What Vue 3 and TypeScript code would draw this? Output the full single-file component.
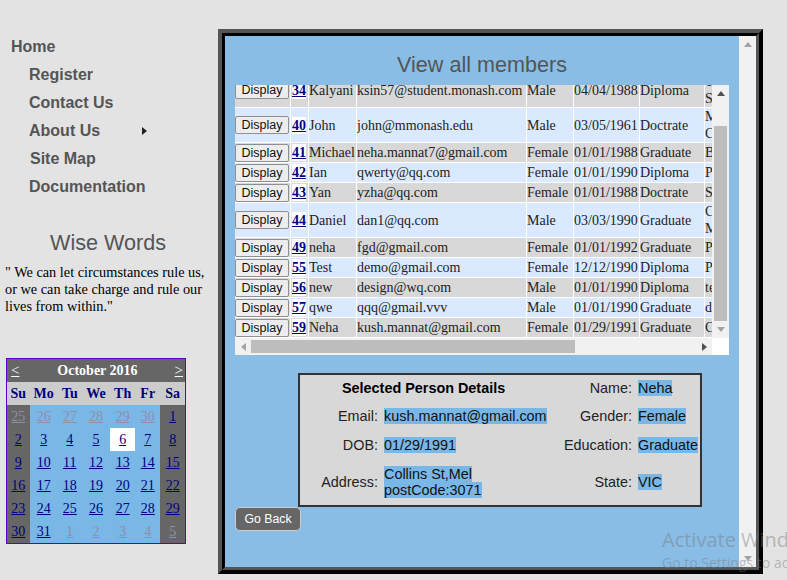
<template>
  <div class="page">
    <aside class="side">
      <nav class="menu">
        <a class="home">Home</a>
        <a>Register</a>
        <a>Contact Us</a>
        <a class="has-sub">About Us<i class="arrow"></i></a>
        <a class="site">Site Map</a>
        <a>Documentation</a>
      </nav>
      <h2 class="wise">Wise Words</h2>
      <p class="quote">" We can let circumstances rule us, or we can take charge and rule our lives from within."</p>
      <table class="cal">
        <colgroup>
          <col v-for="w in calCols" :key="w.id" :style="{ width: w.px + 'px' }" />
        </colgroup>
        <tbody>
          <tr class="cal-title">
            <td class="prev"><a>&lt;</a></td>
            <td colspan="5" class="month">October 2016</td>
            <td class="next"><a>&gt;</a></td>
          </tr>
          <tr class="cal-head">
            <th v-for="d in dayNames" :key="d">{{ d }}</th>
          </tr>
          <tr v-for="(week, i) in weeks" :key="i">
            <td
              v-for="(day, j) in week"
              :key="j"
              :class="{ weekend: j === 0 || j === 6, today: day.n === 6 && !day.other }"
            >
              <a :class="{ other: day.other }">{{ day.n }}</a>
            </td>
          </tr>
        </tbody>
      </table>
    </aside>

    <main class="frame">
      <div class="frame-inner">
        <div class="panel">
          <h1 class="title">View all members</h1>
          <div class="list">
            <div ref="listBox" class="list-view">
              <table class="members">
                <colgroup>
                  <col style="width: 55px" />
                  <col style="width: 17px" />
                  <col style="width: 47px" />
                  <col style="width: 169px" />
                  <col style="width: 46px" />
                  <col style="width: 65px" />
                  <col style="width: 64px" />
                  <col style="width: 100px" />
                  <col style="width: 82px" />
                </colgroup>
                <tbody>
                  <tr class="head">
                    <td></td><td>Id</td><td>Name</td><td>Email</td><td>Gender</td><td>DOB</td><td>Education</td><td>Address</td><td>State</td>
                  </tr>
                  <tr v-for="(m, i) in members" :key="m.id" :class="i % 2 === 0 ? 'odd' : 'even'">
                    <td class="btn-cell"><button class="show">Display</button></td>
                    <td><a class="id">{{ m.id }}</a></td>
                    <td>{{ m.name }}</td>
                    <td>{{ m.email }}</td>
                    <td>{{ m.gender }}</td>
                    <td>{{ m.dob }}</td>
                    <td>{{ m.edu }}</td>
                    <td class="addr">{{ m.addr }}</td>
                    <td>VIC</td>
                  </tr>
                </tbody>
              </table>
            </div>
            <div class="vbar">
              <span class="sb-btn"><i class="tri up dark"></i></span>
              <span class="v-gap"></span>
              <span class="v-thumb"></span>
              <span class="sb-btn"><i class="tri down"></i></span>
            </div>
            <div class="hbar">
              <span class="sb-btn h"><i class="tri left"></i></span>
              <span class="h-thumb"></span>
              <span class="h-gap"></span>
              <span class="sb-btn h"><i class="tri right dark"></i></span>
            </div>
            <div class="corner"></div>
          </div>

          <div class="details">
            <table class="person">
              <colgroup>
                <col style="width: 84px" />
                <col style="width: 172px" />
                <col style="width: 82px" />
                <col style="width: 62px" />
              </colgroup>
              <tbody>
                <tr class="r1">
                  <td colspan="2" class="person-title">Selected Person Details</td>
                  <td class="lbl">Name:</td>
                  <td><span class="val">Neha</span></td>
                </tr>
                <tr class="r2">
                  <td class="lbl">Email:</td>
                  <td><span class="val">kush.mannat@gmail.com</span></td>
                  <td class="lbl">Gender:</td>
                  <td><span class="val">Female</span></td>
                </tr>
                <tr class="r3">
                  <td class="lbl">DOB:</td>
                  <td><span class="val">01/29/1991</span></td>
                  <td class="lbl">Education:</td>
                  <td><span class="val">Graduate</span></td>
                </tr>
                <tr class="r4">
                  <td class="lbl">Address:</td>
                  <td><span class="val">Collins St,Mel<br />postCode:3071</span></td>
                  <td class="lbl">State:</td>
                  <td><span class="val">VIC</span></td>
                </tr>
              </tbody>
            </table>
          </div>
          <button class="back">Go Back</button>
        </div>
        <div class="panel-bar">
          <span class="sb-btn"><i class="tri up"></i></span>
          <span class="sb-btn"><i class="tri down"></i></span>
        </div>
      </div>
    </main>

    <div class="activate">
      <div class="a1">Activate Windows</div>
      <div class="a2">Go to Settings to activate Windows.</div>
    </div>
  </div>
</template>

<script setup lang="ts">
import { onMounted, ref } from 'vue';

interface Member {
  id: number;
  name: string;
  email: string;
  gender: string;
  dob: string;
  edu: string;
  addr: string;
}

interface CalDay {
  n: number;
  other: boolean;
}

const listBox = ref<HTMLElement | null>(null);

const calCols = [23, 28, 24, 28, 25, 25, 25].map((px, id) => ({ id, px }));
const dayNames = ['Su', 'Mo', 'Tu', 'We', 'Th', 'Fr', 'Sa'];

// Sep 25 .. Nov 5
const weeks: CalDay[][] = [];
const seq: CalDay[] = [];
for (let n = 25; n <= 30; n++) seq.push({ n, other: true });
for (let n = 1; n <= 31; n++) seq.push({ n, other: false });
for (let n = 1; n <= 5; n++) seq.push({ n, other: true });
for (let i = 0; i < seq.length; i += 7) weeks.push(seq.slice(i, i + 7));

const members: Member[] = [
  { id: 34, name: 'Kalyani', email: 'ksin57@student.monash.com', gender: 'Male', dob: '04/04/1988', edu: 'Diploma', addr: 'T St\nSuburb' },
  { id: 40, name: 'John', email: 'john@mmonash.edu', gender: 'Male', dob: '03/05/1961', edu: 'Doctrate', addr: 'Monash\nClayton' },
  { id: 41, name: 'Michael', email: 'neha.mannat7@gmail.com', gender: 'Female', dob: '01/01/1988', edu: 'Graduate', addr: 'Box Hill' },
  { id: 42, name: 'Ian', email: 'qwerty@qq.com', gender: 'Female', dob: '01/01/1990', edu: 'Diploma', addr: 'Perth' },
  { id: 43, name: 'Yan', email: 'yzha@qq.com', gender: 'Female', dob: '01/01/1988', edu: 'Doctrate', addr: 'Sydney' },
  { id: 44, name: 'Daniel', email: 'dan1@qq.com', gender: 'Male', dob: '03/03/1990', edu: 'Graduate', addr: 'Clayton\nMonash' },
  { id: 49, name: 'neha', email: 'fgd@gmail.com', gender: 'Female', dob: '01/01/1992', edu: 'Graduate', addr: 'Preston' },
  { id: 55, name: 'Test', email: 'demo@gmail.com', gender: 'Female', dob: '12/12/1990', edu: 'Diploma', addr: 'Parkville' },
  { id: 56, name: 'new', email: 'design@wq.com', gender: 'Male', dob: '01/01/1990', edu: 'Diploma', addr: 'test' },
  { id: 57, name: 'qwe', email: 'qqq@gmail.vvv', gender: 'Male', dob: '01/01/1990', edu: 'Graduate', addr: 'dd' },
  { id: 59, name: 'Neha', email: 'kush.mannat@gmail.com', gender: 'Female', dob: '01/29/1991', edu: 'Graduate', addr: 'Collins St' }
];

onMounted(() => {
  if (listBox.value) listBox.value.scrollTop = listBox.value.scrollHeight;
});
</script>

<style>
html,
body {
  margin: 0;
  height: 100%;
  overflow: hidden;
  background: #e3e3e3;
}
</style>

<style scoped>
.page {
  position: relative;
  width: 787px;
  height: 580px;
  overflow: hidden;
  display: flex;
  align-items: flex-start;
  font-family: 'Liberation Sans', Arial, sans-serif;
}

.side {
  width: 218px;
  flex: none;
  padding-top: 33px;
}

.menu {
  display: flex;
  flex-direction: column;
  font-size: 16px;
  font-weight: bold;
  color: #555;
  padding-left: 29px;
}

.menu a {
  height: 28px;
  line-height: 28px;
  position: relative;
}

.menu .home {
  margin-left: -18px;
}

.menu .site {
  margin-left: 1px;
}

.arrow {
  position: absolute;
  left: 113px;
  top: 10px;
  border-left: 5px solid #222;
  border-top: 4px solid transparent;
  border-bottom: 4px solid transparent;
}

.wise {
  margin: 28px 0 0;
  padding-right: 2px;
  font-size: 21.6px;
  font-weight: normal;
  line-height: 28px;
  color: #555;
  text-align: center;
}

.quote {
  width: 205px;
  margin: 7px 0 0 5px;
  font-family: 'Liberation Serif', serif;
  font-size: 14.3px;
  line-height: 17px;
  color: #000;
}

.cal {
  margin: 43px 0 0 6px;
  width: 180px;
  table-layout: fixed;
  border-collapse: collapse;
  border: 1px solid #5a00cc;
  font-family: 'Liberation Serif', serif;
  font-size: 14px;
  background: #79b7e7;
}

.cal td,
.cal th {
  padding: 0;
  height: 23px;
  text-align: center;
}

.cal a {
  color: #000080;
  text-decoration: underline;
}

.cal a.other {
  color: #8f8fa8;
}

.cal-title td {
  background: #666;
  color: #fff;
  font-weight: bold;
}

.cal .prev {
  text-align: left;
  padding-left: 4px;
}

.cal .next {
  text-align: right;
  padding-right: 2px;
}

.cal .month {
  padding-left: 5px;
}

.cal-title a {
  color: #fff;
  font-size: 15px;
  font-weight: normal;
}

.cal-head th {
  background: #ccc;
  color: #000080;
  font-weight: bold;
}

.cal td.weekend {
  background: #666;
}

.cal td.today {
  background: #fff;
}

.frame {
  width: 545px;
  height: 545px;
  flex: none;
  margin-top: 29px;
  box-sizing: border-box;
  border: 4px solid;
  border-color: #555 #000 #000 #555;
}

.frame-inner {
  height: 100%;
  box-sizing: border-box;
  border: 3px solid;
  border-color: #000 #555 #555 #000;
  display: flex;
}

.panel {
  flex: 1;
  min-width: 0;
  background: #89bde6;
  padding: 0 10px;
}

.panel-bar {
  width: 17px;
  flex: none;
  background: #f1f1f1;
  display: flex;
  flex-direction: column;
  justify-content: space-between;
}

.sb-btn {
  display: flex;
  align-items: center;
  justify-content: center;
  height: 17px;
  flex: none;
}

.sb-btn.h {
  width: 16px;
  height: 17px;
}

.tri {
  display: block;
  width: 0;
  height: 0;
}

.tri.up {
  border-left: 4.5px solid transparent;
  border-right: 4.5px solid transparent;
  border-bottom: 5px solid #a3a3a3;
}

.tri.down {
  border-left: 4.5px solid transparent;
  border-right: 4.5px solid transparent;
  border-top: 5px solid #a3a3a3;
}

.tri.left {
  border-top: 4.5px solid transparent;
  border-bottom: 4.5px solid transparent;
  border-right: 5px solid #a3a3a3;
}

.tri.right {
  border-top: 4.5px solid transparent;
  border-bottom: 4.5px solid transparent;
  border-left: 5px solid #a3a3a3;
}

.tri.up.dark {
  border-bottom-color: #505050;
}

.tri.right.dark {
  border-left-color: #505050;
}

.title {
  margin: 0;
  height: 49px;
  padding-top: 15px;
  box-sizing: border-box;
  line-height: 28px;
  font-size: 21.6px;
  font-weight: normal;
  color: #555;
  text-align: center;
}

.list {
  display: grid;
  grid-template-columns: 477px 17px;
  grid-template-rows: 253px 17px;
  width: 494px;
  background: #fff;
}

.list-view {
  overflow: hidden;
  background: #fff;
}

.vbar {
  background: #f1f1f1;
  display: flex;
  flex-direction: column;
}

.v-gap {
  height: 24px;
  flex: none;
}

.v-thumb {
  display: block;
  width: 13px;
  height: 195px;
  margin: 0 2px;
  flex: none;
  background: #bdbdbd;
}

.hbar {
  background: #f1f1f1;
  display: flex;
}

.h-thumb {
  display: block;
  width: 324px;
  height: 13px;
  margin: 2px 0;
  flex: none;
  background: #bdbdbd;
}

.h-gap {
  flex: 1;
}

.corner {
  background: #fff;
}

.members {
  table-layout: fixed;
  width: 655px;
  border-collapse: separate;
  border-spacing: 1px;
  margin: 0 0 0 -1px;
  font-family: 'Liberation Serif', serif;
  font-size: 14px;
  line-height: 17px;
  color: #222;
}

.members td {
  height: 19px;
  padding: 0;
  white-space: nowrap;
  overflow: hidden;
}

.members td.addr {
  white-space: pre-line;
}

.odd td {
  background: #d8d8d8;
}

.even td {
  background: #dbe9ff;
}

.show {
  display: block;
  box-sizing: border-box;
  width: 54px;
  height: 18px;
  margin: 0;
  padding: 0;
  font-family: 'Liberation Sans', Arial, sans-serif;
  font-size: 12.5px;
  line-height: 14px;
  color: #111;
  background: #ededed;
  border: 1px solid #8f8f8f;
  border-radius: 2px;
}

.id {
  display: inline-block;
  margin-left: 1px;
  background: #fff;
  color: #000080;
  font-weight: bold;
  text-decoration: underline;
}

.details {
  width: 400px;
  height: 130px;
  margin: 18px 0 0 63px;
  border: 2px solid #333;
  background: #d8d8d8;
}

.person {
  width: 400px;
  table-layout: fixed;
  border-collapse: collapse;
  font-size: 14.4px;
  line-height: 16px;
  color: #222;
}

.person td {
  padding: 0;
  vertical-align: middle;
  white-space: nowrap;
}

.r1 td {
  height: 26px;
}

.r2 td {
  height: 30px;
}

.r3 td {
  height: 28px;
}

.r4 td {
  height: 46px;
}

.person td.person-title {
  padding-left: 42px;
  font-weight: bold;
  color: #000;
}

.person td.lbl {
  text-align: right;
  padding-right: 6px;
}

.val {
  background: #79b7e7;
  color: #111;
}

.back {
  display: block;
  width: 66px;
  height: 24px;
  margin: 0;
  padding: 0;
  font-family: 'Liberation Sans', Arial, sans-serif;
  font-size: 12.3px;
  color: #fff;
  background: #666;
  border: 1px solid #ccc;
  border-radius: 5px;
}

.activate {
  position: absolute;
  left: 662px;
  top: 527px;
  white-space: nowrap;
  color: rgba(120, 120, 120, 0.45);
  font-family: 'Open Sans', sans-serif;
  pointer-events: none;
}

.a1 {
  font-size: 20px;
  line-height: 26px;
}

.a2 {
  font-size: 14px;
  line-height: 20px;
}
</style>
